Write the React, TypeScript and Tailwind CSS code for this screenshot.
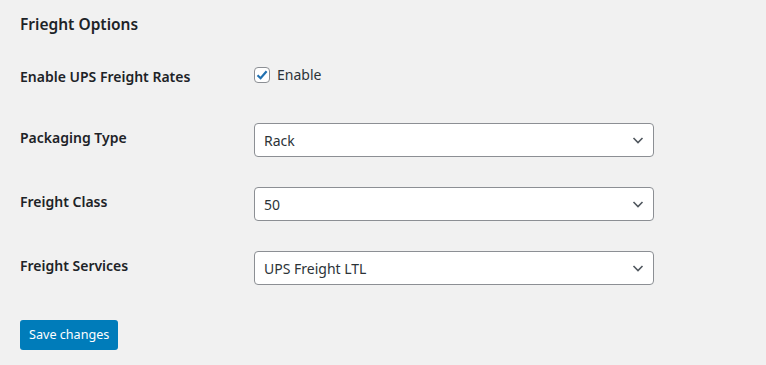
import React from "react";

const font = { fontFamily: '"Noto Sans", "Open Sans", sans-serif' };

const Chevron = () => (
  <svg width="14" height="14" viewBox="0 0 14 14" className="text-[#50575e]">
    <polyline
      points="2.5,5 7,9.5 11.5,5"
      fill="none"
      stroke="currentColor"
      strokeWidth="1.6"
    />
  </svg>
);

const SelectBox: React.FC<{ value: string }> = ({ value }) => (
  <div className="flex h-[34px] w-[400px] items-center justify-between rounded-[4px] border border-[#8c8f94] bg-white pl-[9px] pr-[8px] text-[14px] text-[#2c3338]">
    <span>{value}</span>
    <Chevron />
  </div>
);

const Row: React.FC<{ label: string; children: React.ReactNode }> = ({
  label,
  children,
}) => (
  <div className="flex h-10 items-center">
    <div className="mb-[5px] w-[234px] text-[14px] font-semibold text-[#1d2327]">
      {label}
    </div>
    {children}
  </div>
);

export default function App() {
  return (
    <div
      className="min-h-[365px] w-full bg-[#f1f1f1] px-5 pt-[12px]"
      style={font}
    >
      <h2 className="h-6 text-[15.5px] font-semibold leading-6 text-[#1d2327]">
        Frieght Options
      </h2>

      <div className="mt-[20px] flex flex-col gap-6">
        <div className="flex h-10 items-center">
          <div className="w-[234px] text-[14px] font-semibold text-[#1d2327]">
            Enable UPS Freight Rates
          </div>
          <label className="mb-[3px] flex items-center gap-[7px] text-[14px] text-[#2c3338]">
            <span className="flex h-4 w-4 items-center justify-center rounded-[4px] border border-[#8c8f94] bg-white">
              <svg width="14" height="14" viewBox="0 0 14 14">
                <polyline
                  points="2.5,7.2 5.6,10.2 11.6,3.2"
                  fill="none"
                  stroke="#2271b1"
                  strokeWidth="2.2"
                />
              </svg>
            </span>
            Enable
          </label>
        </div>

        <Row label="Packaging Type">
          <SelectBox value="Rack" />
        </Row>
        <Row label="Freight Class">
          <SelectBox value="50" />
        </Row>
        <Row label="Freight Services">
          <SelectBox value="UPS Freight LTL" />
        </Row>
      </div>

      <button className="mt-8 h-[30px] rounded-[3px] bg-[#007cba] px-[9px] text-[12.6px] text-white">
        Save changes
      </button>
    </div>
  );
}
